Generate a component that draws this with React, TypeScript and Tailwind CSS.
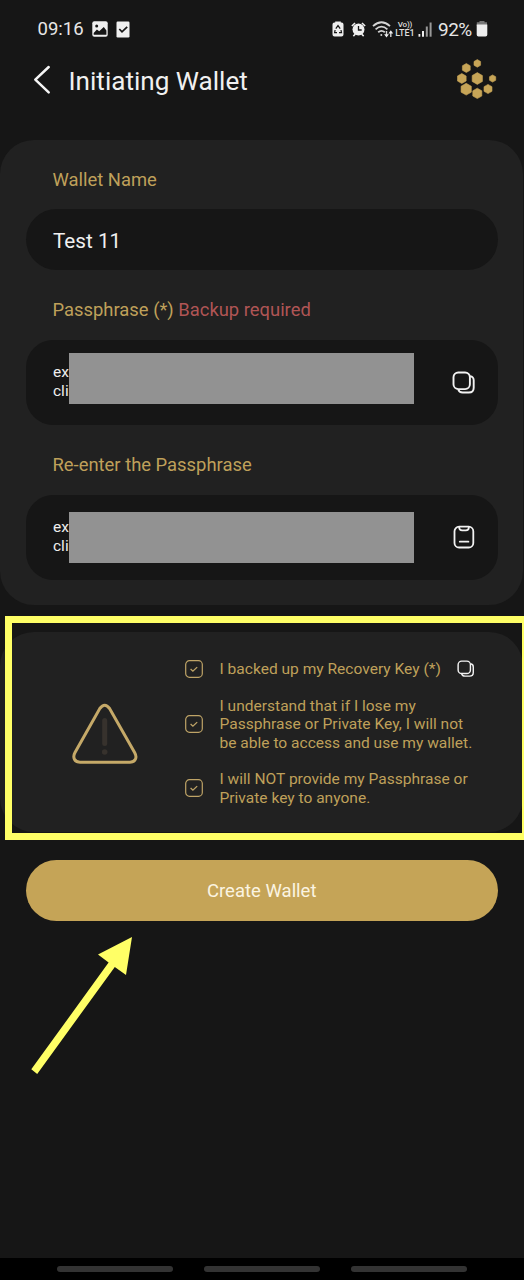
import type { ReactNode } from "react";

function CopyIcon({ className }: { className: string }) {
  return (
    <svg viewBox="0 0 24 24" className={className} fill="none" stroke="#f2f2f2" strokeWidth="1.9">
      <rect x="1.500" y="1.500" width="16.400" height="16.600" rx="4.800" />
      <path d="M18.100 5.100c2.400.4 3.600 1.800 3.600 4.200v7.400c0 3.200-1.700 4.800-4.900 4.800H10.700c-2.500 0-3.900-1-4.500-3.200" />
    </svg>
  );
}

function PasteIcon() {
  return (
    <svg viewBox="0 0 22 24" className="mr-px mb-px h-6 w-[22px]" fill="none" stroke="#f2f2f2" strokeWidth="1.8" strokeLinecap="round">
      <rect x="1.500" y="1.700" width="18.800" height="20.800" rx="4.600" />
      <path d="M6.200 1.900v.5c0 1.900 1 2.900 2.900 2.900h3.800c1.900 0 2.900-1 2.900-2.900v-.5" />
      <path d="M6.800 16.700h8.600" />
    </svg>
  );
}

function CheckBox() {
  return (
    <svg viewBox="0 0 18 18" className="size-[18px] shrink-0" fill="none" stroke="#bfa467">
      <rect x=".7" y=".7" width="16.600" height="16.600" rx="3.800" strokeWidth="1.2" />
      <path d="M5.600 9l2.300 2.200 4.300-4.100" strokeWidth="1.3" />
    </svg>
  );
}

function StatusBar() {
  return (
    <div className="flex h-[58px] items-center pl-[37.500px] pr-[36px] text-[#e6e6e6]">
      <span className="w-[54.500px] text-[18.500px] leading-none">09:16</span>
      <svg viewBox="0 0 16 16" className="size-4">
        <rect x=".3" y=".3" width="15.400" height="15.400" rx="2" fill="#f0f0f0" />
        <circle cx="4.700" cy="5" r="1.500" fill="#161616" />
        <path d="M1.700 13.700V12l3.200-3.500 2.300 1.700 4.600-4.300 2.600 3.600v4.200z" fill="#161616" />
      </svg>
      <svg viewBox="0 0 14 17" className="ml-2 h-[17px] w-[14px]">
        <rect x=".5" y=".5" width="13" height="16" rx="1.200" fill="#f0f0f0" />
        <path d="M3.300 8l2.700 2.900 5.200-5" fill="none" stroke="#161616" strokeWidth="1.700" />
      </svg>
      <svg viewBox="0 0 12 16" className="ml-auto h-4 w-3">
        <path d="M3.200 1.500V.4h5.600v1.100h.8q1.900 0 1.900 1.900v10.100q0 2-2 2h-7q-2 0-2-2V3.400q0-1.900 1.900-1.900z" fill="#eee" />
        <path d="M3.800 7.600L6 4.600l2.200 3M9 9l.5 2.700H7M5 11.700H2.600L3.100 9" fill="none" stroke="#161616" strokeWidth="1.200" />
      </svg>
      <svg viewBox="0 0 16 16" className="ml-[7px] size-[15px]">
        <circle cx="8" cy="8" r="6.400" fill="#eee" />
        <path d="M.9 4.300L4.300 1.100M11.700 1.100l3.400 3.200M2.500 15l2.200-2.200M13.500 15l-2.200-2.200" stroke="#eee" strokeWidth="1.700" />
        <path d="M8 4.200v4.300h3.400" fill="none" stroke="#161616" strokeWidth="1.400" />
      </svg>
      <svg viewBox="0 0 22 17" className="ml-[6px] h-[17px] w-[22px]" fill="none" stroke="#d4d4d4" strokeWidth="1.800">
        <path d="M1 5.200q8.500-7.800 17 0M3.600 8.300q5.900-5.300 11.800 0M6.200 11.300q3.300-2.900 6.600 0" />
        <circle cx="9.300" cy="14" r="1" fill="#d4d4d4" stroke="none" />
        <path d="M14.500 10v5M18.800 16v-5" strokeWidth="1.400" />
        <path d="M12.100 13.200h4.800l-2.400 3.200zM16.400 12.500h4.800l-2.400-3.200z" fill="#eee" stroke="none" />
      </svg>
      <div className="flex w-[22px] flex-col items-center font-medium text-[#dedede]">
        <span className="text-[8px] leading-[9px] tracking-[-0.2px]">Vo))</span>
        <span className="text-[9px] leading-[9px]">LTE1</span>
      </div>
      <svg viewBox="0 0 14 15" className="ml-[2px] h-[15px] w-[14px]">
        <path d="M.5 12h1.800v2.700H.5z" fill="#eee" />
        <path d="M4 9h2v5.700H4z" fill="#eee" />
        <path d="M7.800 4.500h2v10.200h-2z" fill="#999" />
        <path d="M11.600.5h2v14.200h-2z" fill="#999" />
      </svg>
      <span className="ml-[6px] w-[38px] text-[19px] leading-none tracking-[-0.5px]">92%</span>
      <svg viewBox="0 0 12 16" className="h-4 w-3">
        <path d="M3.500 0h5v1.300H11V5H.8V1.300h2.700z" fill="#777" />
        <path d="M.7 3.400h10.600v10.300q0 1.800-1.800 1.800h-7q-1.800 0-1.800-1.800z" fill="#eee" />
      </svg>
    </div>
  );
}

const dots = [
  [20.300, 4.400, 3.800],
  [9.300, 9, 4.500],
  [4.800, 19.500, 5],
  [20.300, 19.500, 5.900],
  [35.600, 19.500, 3.600],
  [9.200, 30.200, 5.900],
  [20.300, 34.400, 5.200],
  [31, 30, 4.600],
];

function hexagon([x, y, r]: number[]) {
  const w = r * 0.87;
  return `M${x} ${y - r}L${x + w} ${y - r / 2}V${y + r / 2}L${x} ${y + r}L${x - w} ${y + r / 2}V${y - r / 2}Z`;
}

function Header() {
  return (
    <header className="flex h-[82px] items-start pl-[33px] pr-[27px]">
      <svg viewBox="0 0 18 30" className="mt-[7px] h-[30px] w-[18px]" fill="none" stroke="#f5f5f5" strokeWidth="2.500" strokeLinecap="round" strokeLinejoin="round">
        <path d="M15.700 2L2.300 14.700l13.400 12.700" />
      </svg>
      <h1 className="ml-[17.500px] mt-[7px] text-[26.100px] leading-[32px] text-[#f0f0f0]">Initiating Wallet</h1>
      <svg viewBox="0 0 40 40" className="ml-auto mt-[1px] size-10">
        <path d={dots.map(hexagon).join("")} fill="#c7a557" stroke="#c7a557" strokeWidth=".6" strokeLinejoin="round" />
      </svg>
    </header>
  );
}

function Label({ children }: { children: ReactNode }) {
  return <div className="pl-[26.500px] text-[18.400px] leading-[24px] text-[#bfa05a]">{children}</div>;
}

function SecretField({ barClass, children }: { barClass: string; children: ReactNode }) {
  return (
    <div className="flex h-[85px] rounded-[27px] bg-[#161616] pl-[27px] pr-[22px]">
      <div className="mt-[23px] w-4 overflow-hidden text-[15.500px] leading-[18.500px] whitespace-nowrap text-[#eee]">
        ex
        <br />
        cli
      </div>
      <div className={`w-[344.500px] bg-[#929292] ${barClass}`} />
      <div className="ml-auto flex items-center">{children}</div>
    </div>
  );
}

function Consent({ children, className }: { children: ReactNode; className: string }) {
  return (
    <div className={`flex items-center text-[15.550px] leading-[18.500px] text-[#bfa05a] ${className}`}>
      <CheckBox />
      <div className="ml-[16.500px] mt-[0.700px] -mb-[0.700px] whitespace-nowrap">{children}</div>
    </div>
  );
}

export default function App() {
  return (
    <div className="relative flex h-[1280px] w-[524px] flex-col overflow-hidden bg-[#161616] font-[Roboto,sans-serif]">
      <StatusBar />
      <Header />
      <section className="mr-px h-[465px] rounded-[34px] bg-[#212121] pl-[26px] pr-[25.500px] pt-[28px]">
        <Label>Wallet Name</Label>
        <div className="mt-[17px] flex h-[61px] items-center rounded-full bg-[#161616] pl-[27px] pt-[4px] text-[20.700px] text-[#f0f0f0]">
          Test 11
        </div>
        <div className="mt-[28px]">
          <Label>
            Passphrase (*) <span className="text-[#b05555]">Backup required</span>
          </Label>
        </div>
        <div className="mt-[18px]">
          <SecretField barClass="mt-[13px] h-[51px]">
            <CopyIcon className="size-6" />
          </SecretField>
        </div>
        <div className="mt-[28px]">
          <Label>Re-enter the Passphrase</Label>
        </div>
        <div className="mt-[18px]">
          <SecretField barClass="mt-[17px] h-[51px]">
            <PasteIcon />
          </SecretField>
        </div>
      </section>
      <section className="mr-px mt-[27px] flex h-[200px] rounded-[34px] bg-[#212121] pl-[72px]">
        <svg viewBox="0 0 66 62" className="mt-[71px] h-[62px] w-[66px]" fill="none">
          <path d="M27.800 5.500Q32.700-1 37.600 5.500L62.600 49.500C65.500 54.500 63.500 59.200 58 59.200H8C2.500 59.200.3 54.500 3 49.500Z" stroke="#c5a968" strokeWidth="3" />
          <path d="M32.700 17.500v23" stroke="#37322d" strokeWidth="5" strokeLinecap="round" />
          <circle cx="32.700" cy="49" r="2.800" fill="#37322d" />
        </svg>
        <div className="ml-[47px] pt-[28px]">
          <Consent className="h-[18px]">
            <div className="flex items-center">
              I backed up my Recovery Key (*)
              <CopyIcon className="-mt-[2px] ml-4 size-[18px]" />
            </div>
          </Consent>
          <Consent className="mt-[18px]">
            I understand that if I lose my
            <br />
            Passphrase or Private Key, I will not
            <br />
            be able to access and use my wallet.
          </Consent>
          <Consent className="mt-[18px]">
            I will NOT provide my Passphrase or
            <br />
            Private key to anyone.
          </Consent>
        </div>
      </section>
      <button className="ml-[26px] mt-[27.500px] h-[61px] w-[471.500px] rounded-full bg-[#c5a457] pt-[3px] text-[18.500px] text-[#fbf4e2]">
        Create Wallet
      </button>
      <nav className="mt-auto flex h-[22px] items-center justify-between bg-black px-[57px]">
        <div className="h-[6px] w-[116px] rounded-full bg-[#333]" />
        <div className="h-[6px] w-[116px] rounded-full bg-[#333]" />
        <div className="h-[6px] w-[116px] rounded-full bg-[#333]" />
      </nav>
      <div className="absolute left-[5px] top-[616px] h-[224px] w-[523px] border-[7px] border-r-[6px] border-[#ffff66]" />
      <svg viewBox="0 0 110 140" className="absolute left-[27px] top-[935px] h-[140px] w-[110px]">
        <path d="M105 2L71 19.500L81.600 27.600L4.300 134.300L10.200 138.900L87.800 32L99 40Z" fill="#ffff66" />
      </svg>
    </div>
  );
}
